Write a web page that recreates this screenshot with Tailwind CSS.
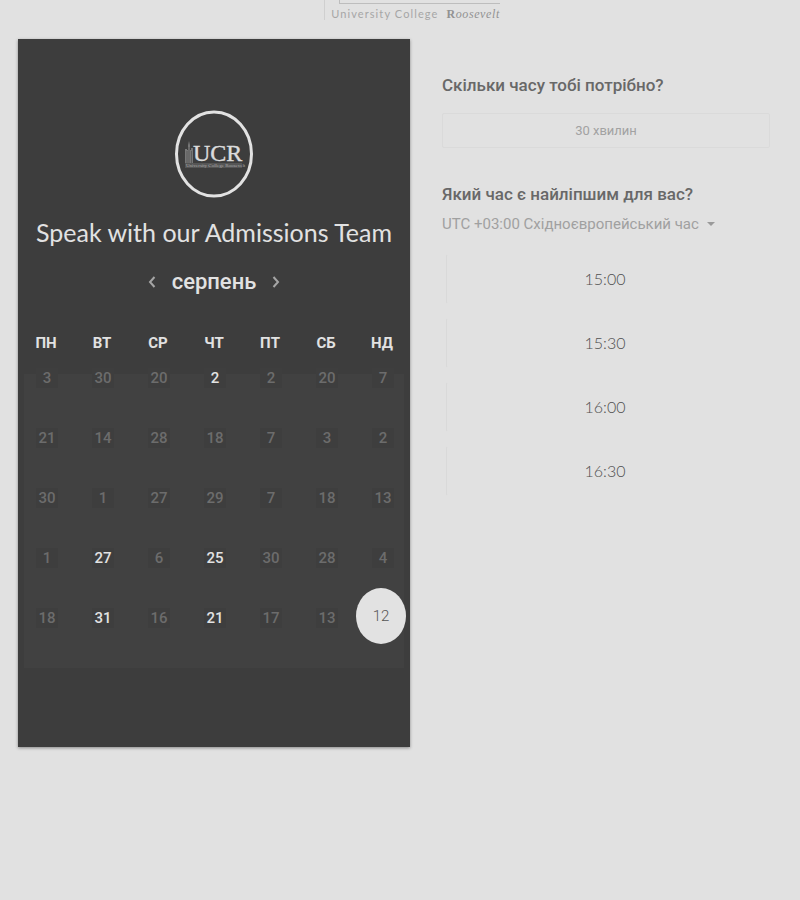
<!DOCTYPE html>
<html lang="uk">
<head>
<meta charset="utf-8">
<meta name="viewport" content="width=device-width, initial-scale=1">
<title>Speak with our Admissions Team</title>
<script src="https://cdn.jsdelivr.net/npm/@tailwindcss/browser@4"></script>
</head>
<body class="min-h-screen bg-[#e1e1e1] font-['Roboto','Liberation_Sans',sans-serif] text-[#686868]">
<header class="flex h-[39px] items-start justify-center pl-6">
  <a href="#" aria-label="University College Roosevelt" class="flex h-5 border-l border-[#cfcfcf] pl-1.5 text-[#a6a6a6]">
    <span class="flex flex-col">
      <span class="ml-2 h-1 shrink-0 border-b border-l border-[#bdbdbd]"></span>
      <span class="flex items-baseline gap-2 text-[11px] leading-5 whitespace-nowrap">
        <span class="font-['Lato',sans-serif] tracking-widest">University College</span>
        <span class="font-['Liberation_Serif',serif] text-xs leading-5 tracking-wider text-[#929292]"><b>R</b><i>oosevelt</i></span>
      </span>
    </span>
  </a>
</header>

<main class="grid grid-cols-[392fr_360fr] items-start pr-[30px] pl-[18px]">
  <section aria-label="Календар" class="bg-[#3d3d3d] pt-[71px] pb-[79px] text-[#e2e2e2] shadow-[0_1px_3px_#888]">
    <svg class="mx-auto block h-[88px] w-20" viewBox="0 0 80 88" role="img" aria-label="UCR">
      <ellipse cx="40" cy="44" rx="37.500" ry="42" fill="none" stroke="#e2e2e2" stroke-width="3"/>
      <g fill="#777">
        <path d="M14 35l1-4 1 4v5h3v14h-7V40h2z"/>
        <path d="M11 39h2v15h-2zM17 38h2v16h-2z"/>
      </g>
      <path d="M13 41v12M15 37v16M17.500 41v12" stroke="#505050" stroke-width=".7"/>
      <text x="19" y="51" font-family="Liberation Serif, serif" font-size="24" fill="#dcdcdc" stroke="#dcdcdc" stroke-width=".4">UCR</text>
      <rect x="11" y="53" width="57" height="5" fill="#555"/>
      <text x="12" y="57" font-family="Liberation Serif, serif" font-size="5" fill="#aaa">University College Roosevelt</text>
    </svg>
    <h1 class="mt-4 text-center font-['Lato',sans-serif] text-[25px] leading-9 whitespace-nowrap">Speak with our Admissions Team</h1>
    <div class="mt-4 flex h-8 items-center justify-center gap-3.5">
      <button type="button" aria-label="Попередній місяць" class="flex h-6 w-3 items-center justify-center text-[#a5a5a5]">
        <svg class="h-3 w-2" viewBox="0 0 8 12" fill="none" stroke="currentColor" stroke-width="2"><path d="M6.500 1L2 6l4.500 5"/></svg>
      </button>
      <h2 class="text-[22px] leading-8 font-medium">серпень</h2>
      <button type="button" aria-label="Наступний місяць" class="flex h-6 w-3 items-center justify-center text-[#a5a5a5]">
        <svg class="h-3 w-2" viewBox="0 0 8 12" fill="none" stroke="currentColor" stroke-width="2"><path d="M1.500 1L6 6l-4.500 5"/></svg>
      </button>
    </div>
    <table class="mt-5 w-full table-fixed border-collapse bg-[linear-gradient(#414141,#414141)] bg-[length:calc(100%-12px)_294px] bg-bottom bg-no-repeat text-center">
      <thead>
        <tr class="h-[50px] text-[15px]">
          <th scope="col">ПН</th><th scope="col">ВТ</th><th scope="col">СР</th><th scope="col">ЧТ</th><th scope="col">ПТ</th><th scope="col">СБ</th><th scope="col">НД</th>
        </tr>
      </thead>
      <tbody id="days" class="align-top text-[15px] leading-5 font-medium"></tbody>
    </table>
  </section>

  <section aria-label="Час зустрічі" class="min-w-0 pt-8 pl-8">
    <h2 class="text-[17px] leading-7 font-medium">Скільки часу тобі потрібно?</h2>
    <button type="button" class="mt-3.5 block h-[35px] w-full rounded-xs border border-[#dadada] text-[13px] text-[#a2a2a2]">30 хвилин</button>
    <h2 class="mt-8 text-[17px] leading-7 font-medium">Який час є найліпшим для вас?</h2>
    <div class="mt-1 flex h-6 items-center gap-2 text-[#a0a0a0]">
      <select aria-label="Часовий пояс" class="appearance-none text-[15px] leading-6">
        <option>UTC +03:00 Східноєвропейський час</option>
      </select>
      <svg class="h-1 w-2" viewBox="0 0 8 4" fill="#9a9a9a" aria-hidden="true"><path d="M0 0h8L4 4z"/></svg>
    </div>
    <div id="times" class="mt-[18px] mr-1.5 ml-1 flex flex-col gap-3.5 font-['Lato',sans-serif] text-base text-[#505050]"></div>
  </section>
</main>

<script>
const weeks = [
  [3, 30, 20, 2, 2, 20, 7],
  [21, 14, 28, 18, 7, 3, 2],
  [30, 1, 27, 29, 7, 18, 13],
  [1, 27, 6, 25, 30, 28, 4],
  [18, 31, 16, 21, 17, 13, 12],
];
const open = ['0-3', '3-1', '3-3', '4-1', '4-3'];
document.getElementById('days').innerHTML = weeks.map((week, r) =>
  '<tr class="h-[60px]">' + week.map((day, c) => {
    const key = r + '-' + c;
    if (key === '4-6') return '<td class="pr-0.5"><button type="button" aria-pressed="true" class="mx-auto -mt-5 block h-14 w-[50px] rounded-[50%] bg-[#e2e2e2] font-light text-[#555]">' + day + '</button></td>';
    if (open.includes(key)) return '<td class="pl-0.5"><button type="button" class="w-[22px] bg-[#3e3e3e] text-[#e2e2e2]">' + day + '</button></td>';
    return '<td class="pl-0.5"><button type="button" disabled class="w-[22px] bg-[#3e3e3e] text-[#6c6c6c]">' + day + '</button></td>';
  }).join('') + '</tr>').join('');
document.getElementById('times').innerHTML = ['15:00', '15:30', '16:00', '16:30'].map(t =>
  '<button type="button" class="h-[50px] rounded-xs border border-transparent border-l-[#d9d9d9] font-light">' + t + '</button>').join('');
</script>
</body>
</html>
